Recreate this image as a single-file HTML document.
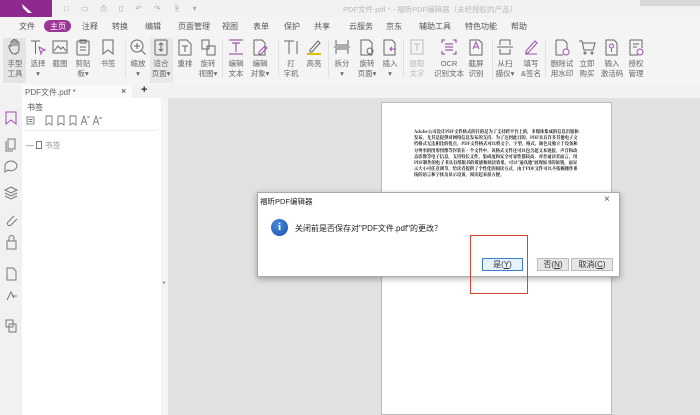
<!DOCTYPE html>
<html><head><meta charset="utf-8"><style>
*{margin:0;padding:0;box-sizing:border-box}
body{width:700px;height:415px;overflow:hidden;position:relative;background:#e1e1e1;font-family:"Liberation Sans","Noto Sans CJK SC",sans-serif;color:#444}
.a{position:absolute}
.t{position:absolute;font-size:8px;color:#555;white-space:nowrap}
.tool{position:absolute;top:38px;width:26px;text-align:center;font-size:7.5px;line-height:9.5px;color:#666}
.tool svg{display:block;margin:0 auto 3px;width:18px;height:18px}
.m{position:absolute;top:21px;font-size:8px;color:#555}
.sep{position:absolute;top:40px;width:1px;height:38px;background:#e2e2e2}
.btn{position:absolute;top:258px;height:13px;font-size:8px;text-align:center;line-height:11px;border:1px solid #bbb;background:#e6e6e6;color:#333}
</style></head><body>
<div class="a" style="left:0;top:0;width:700px;height:17px;background:#f2f2f2"></div>
<div class="a" style="left:0;top:0;width:52px;height:17px;background:#8e2a8f"></div>
<svg class="a" style="left:20px;top:2px" width="14" height="13"><path d="M2 2 L12 11 L8 11 L3 6 Z" fill="#fff"/></svg>
<div class="t" style="left:64px;top:3px;color:#aaa;letter-spacing:12px">□▭⎙▯↶↷☝▾</div>
<div class="t" style="left:343px;top:4px;color:#bbb;font-size:7.5px">PDF文件.pdf * - 福昕PDF编辑器（未经授权的产品）</div>
<div class="a" style="left:640px;top:0;width:60px;height:6px;background:#d8d8d8"></div>
<div class="a" style="left:0;top:17px;width:700px;height:68px;background:#f4f4f4"></div>
<div class="m" style="left:19px">文件</div>
<div class="a" style="left:44px;top:20px;width:27px;height:12px;border-radius:6px;background:#9b3596"></div>
<div class="m" style="left:50px;color:#fff">主页</div>
<div class="m" style="left:82px">注释</div>
<div class="m" style="left:112px">转换</div>
<div class="m" style="left:145px">编辑</div>
<div class="m" style="left:178px">页面管理</div>
<div class="m" style="left:222px">视图</div>
<div class="m" style="left:253px">表单</div>
<div class="m" style="left:284px">保护</div>
<div class="m" style="left:314px">共享</div>
<div class="m" style="left:349px">云服务</div>
<div class="m" style="left:386px">京东</div>
<div class="m" style="left:419px">辅助工具</div>
<div class="m" style="left:465px">特色功能</div>
<div class="m" style="left:511px">帮助</div>
<div class="a" style="left:3px;top:38px;width:23px;height:45px;background:#e4e4e4"></div>
<div class="a" style="left:150px;top:38px;width:23px;height:45px;background:#e8e8e8"></div>
<div class="sep" style="left:125px"></div><div class="sep" style="left:222px"></div><div class="sep" style="left:278px"></div><div class="sep" style="left:328px"></div><div class="sep" style="left:403px"></div><div class="sep" style="left:492px"></div><div class="sep" style="left:545px"></div>
<div class="tool" style="left:2px"><svg viewBox="0 0 18 18" fill="none" stroke="#666"><path d="M5 9V4a1 1 0 012 0v4M7 8V2.5a1 1 0 012 0V8M9 8V3a1 1 0 012 0v5M11 8V5a1 1 0 012 0v6c0 3-2 5-4.5 5S5 14 4 12L3 9a1 1 0 012-1"/></svg>手型<br>工具</div>
<div class="tool" style="left:25px"><svg viewBox="0 0 18 18" fill="none" stroke="#666"><path d="M2 3h9M6.5 3v13"/><path d="M10 9l6 3-3 1-1 3z" stroke="#a050b0"/></svg>选择<br>▾</div>
<div class="tool" style="left:47px"><svg viewBox="0 0 18 18" fill="none" stroke="#666"><rect x="2" y="3" width="14" height="12"/><path d="M3 13l4-5 3 3 2-2 3 4"/></svg>截图</div>
<div class="tool" style="left:70px"><svg viewBox="0 0 18 18" fill="none" stroke="#666"><rect x="3" y="3" width="12" height="14" rx="1"/><path d="M6 2h6v3H6zM6 9h6M6 12h6"/></svg>剪贴<br>板▾</div>
<div class="tool" style="left:95px"><svg viewBox="0 0 18 18" fill="none" stroke="#666"><path d="M4 2h10v14l-5-4-5 4z"/></svg>书签</div>
<div class="tool" style="left:125px"><svg viewBox="0 0 18 18" fill="none" stroke="#666"><circle cx="8" cy="8" r="6"/><path d="M12.5 12.5l4 4M5 8h6M8 5v6"/></svg>缩放<br>▾</div>
<div class="tool" style="left:148px"><svg viewBox="0 0 18 18" fill="none" stroke="#666"><rect x="3" y="2" width="12" height="15" rx="1"/><path d="M9 6v6M7 7l2-2 2 2M7 11l2 2 2-2"/></svg>适合<br>页面▾</div>
<div class="tool" style="left:172px"><svg viewBox="0 0 18 18" fill="none" stroke="#666"><path d="M3 2h8l4 4v11H3z"/><path d="M6 8h6M9 8v6"/></svg>重排</div>
<div class="tool" style="left:195px"><svg viewBox="0 0 18 18" fill="none" stroke="#666"><path d="M3 2h7v9H3zM8 8h8v9H8z"/></svg>旋转<br>视图▾</div>
<div class="tool" style="left:223px"><svg viewBox="0 0 18 18" fill="none" stroke="#8a3a9a"><path d="M2 2h14M2 16h14M5 5h8M9 5v9"/></svg>编辑<br>文本</div>
<div class="tool" style="left:247px"><svg viewBox="0 0 18 18" fill="none" stroke="#666"><path d="M3 2h8l3 3v12H3z"/><path d="M8 14l6-6 2 2-6 6H8z" stroke="#a050b0"/></svg>编辑<br>对象▾</div>
<div class="tool" style="left:278px"><svg viewBox="0 0 18 18" fill="none" stroke="#666"><path d="M2 3h10M7 3v13M15 3v13"/></svg>打<br>字机</div>
<div class="tool" style="left:301px"><svg viewBox="0 0 18 18" fill="none" stroke="#666"><path d="M5 12l8-9 2 2-8 9H5z"/><path d="M2 16h14" stroke="#e0c000" stroke-width="2"/></svg>高亮</div>
<div class="tool" style="left:329px"><svg viewBox="0 0 18 18" fill="none" stroke="#666"><path d="M3 2v5h12V2M3 16v-5h12v5M1 9h16"/></svg>拆分<br>▾</div>
<div class="tool" style="left:354px"><svg viewBox="0 0 18 18" fill="none" stroke="#666"><path d="M3 2h8l3 3v12H3z"/><circle cx="12" cy="13" r="3"/></svg>旋转<br>页面▾</div>
<div class="tool" style="left:377px"><svg viewBox="0 0 18 18" fill="none" stroke="#666"><path d="M3 2h8l3 3v12H3z"/><path d="M15 11H9M11 9l-2 2 2 2" stroke="#a050b0"/></svg>插入<br>▾</div>
<div class="tool" style="left:404px;color:#bbb"><svg viewBox="0 0 18 18" fill="none" stroke="#bbb"><rect x="3" y="2" width="12" height="14"/><path d="M6 6h6M9 6v7"/></svg>提取<br>文字</div>
<div class="tool" style="left:433px;width:32px"><svg viewBox="0 0 18 18" fill="none" stroke="#8a3a9a"><path d="M2 5V2h3M13 2h3v3M2 13v3h3M13 16h3v-3M5 6h8M5 9h8M5 12h8"/></svg>OCR<br>识别文本</div>
<div class="tool" style="left:463px"><svg viewBox="0 0 18 18" fill="none" stroke="#666"><path d="M3 2h9l3 3v12H3z"/><path d="M6 11l3-7 3 7M7 9h4" stroke="#a050b0"/></svg>截屏<br>识别</div>
<div class="tool" style="left:492px"><svg viewBox="0 0 18 18" fill="none" stroke="#666"><path d="M4 2h10v5M4 2v5M1 9h16M4 11v5h10v-5"/></svg>从扫<br>描仪▾</div>
<div class="tool" style="left:518px"><svg viewBox="0 0 18 18" fill="none" stroke="#a050b0"><path d="M4 13l9-10 2 2-9 10H4zM3 16h12"/></svg>填写<br>&amp;签名</div>
<div class="tool" style="left:549px"><svg viewBox="0 0 18 18" fill="none" stroke="#666"><path d="M3 2h8l3 3v6M3 2v15h7"/><circle cx="13" cy="14" r="3" stroke="#a050b0"/></svg>删除试<br>用水印</div>
<div class="tool" style="left:574px"><svg viewBox="0 0 18 18" fill="none" stroke="#666"><path d="M1 3h3l2 9h9l2-7H5"/><circle cx="7" cy="15" r="1"/><circle cx="14" cy="15" r="1"/></svg>立即<br>购买</div>
<div class="tool" style="left:599px"><svg viewBox="0 0 18 18" fill="none" stroke="#666"><path d="M3 2h8l3 3v12H3z"/><circle cx="8.5" cy="8" r="2" stroke="#a050b0"/><path d="M8.5 10v4" stroke="#a050b0"/></svg>输入<br>激活码</div>
<div class="tool" style="left:623px"><svg viewBox="0 0 18 18" fill="none" stroke="#666"><path d="M3 2h12v8M3 2v15h8M6 6h6M6 9h4"/><circle cx="13" cy="14" r="3" stroke="#a050b0"/></svg>授权<br>管理</div>
<div class="a" style="left:0;top:85px;width:700px;height:13px;background:#f2f2f2"></div>
<div class="a" style="left:22px;top:85px;width:110px;height:13px;background:#fafafa"></div>
<div class="t" style="left:25px;top:87px;color:#666">PDF文件.pdf *</div>
<div class="t" style="left:121px;top:86px;color:#333;font-size:9px">×</div>
<div class="t" style="left:141px;top:84px;color:#333;font-size:11px;font-weight:bold">+</div>
<div class="a" style="left:0;top:98px;width:22px;height:317px;background:#f1f1f1"></div>
<svg class="a" style="left:0;top:98px" width="22" height="250" fill="none" stroke="#777">
<path d="M6 14h10v12l-5-4-5 4z" stroke="#a050b0"/>
<path d="M8 41h7v10H8zM6 43v10h7"/>
<path d="M5 68a6 5 0 1112 0 6 5 0 01-9 4l-3 2z"/>
<path d="M11 89l6 3-6 3-6-3zM5 95l6 3 6-3M5 98l6 3 6-3"/>
<path d="M14 118l-6 6a2 2 0 003 3l6-6"/>
<path d="M7 143h9v8H7zM9 143v-3a2.5 2.5 0 015 0v3"/>
<path d="M7 170h6l3 3v9H7z"/>
<path d="M7 202l4-8 3 6M12 198h5"/>
<path d="M6 222h7v7H6zM9 226h7v8H9z"/>
</svg>
<div class="a" style="left:22px;top:98px;width:139px;height:317px;background:#fff"></div>
<div class="t" style="left:27px;top:102px;color:#444">书签</div>
<svg class="a" style="left:26px;top:115px" width="90" height="11" fill="none" stroke="#777" stroke-width="0.9">
<rect x="1" y="2" width="7" height="7"/><path d="M2.5 4.5h4M2.5 6.5h4"/>
<path d="M20 1h6v9l-3-2-3 2z"/><path d="M32 1h6v9l-3-2-3 2z"/><path d="M44 1h6v9l-3-2-3 2z"/>
<path d="M55 10l3-9 3 9M56 7h4M61 2h3"/><path d="M67 10l3-9 3 9M68 7h4M73 3h3"/>
</svg>
<div class="a" style="left:25px;top:130px;width:132px;height:1px;background:#eee"></div>
<div class="t" style="left:26px;top:140px;color:#666">— <span style="display:inline-block;width:6px;height:8px;border:1px solid #777;vertical-align:-1px"></span> <span style="color:#999">书签</span></div>
<div class="a" style="left:161px;top:98px;width:7px;height:317px;background:#f4f4f4"></div>
<div class="t" style="left:162px;top:279px;color:#999;font-size:6px">◂</div>
<div class="a" style="left:381px;top:102px;width:231px;height:313px;background:#fff;border:1px solid #bbb"></div>
<div class="a" style="left:414px;top:129px;width:166px;font-size:4.3px;line-height:6.2px;color:#111;font-family:'Noto Serif CJK SC',serif;font-weight:bold">Adobe公司设计PDF文件格式的目的是为了支持跨平台上的，多媒体集成的信息出版和发布，尤其是提供对网络信息发布的支持。为了达到此目的，PDF具有许多其他电子文档格式无法相比的优点。PDF文件格式可以将文字、字型、格式、颜色及独立于设备和分辨率的图形图像等封装在一个文件中。该格式文件还可以包含超文本链接、声音和动态影像等电子信息，支持特长文件，集成度和安全可靠性都较高。对普通读者而言，用PDF制作的电子书具有纸版书的质感和阅读效果，可以"逼真地"展现原书的原貌，而显示大小可任意调节，给读者提供了个性化的阅读方式。由于PDF文件可以不依赖操作系统的语言和字体及显示设备，阅读起来很方便。</div>
<div class="a" style="left:257px;top:192px;width:363px;height:85px;background:#fff;border:1px solid #aaa;box-shadow:0 2px 6px rgba(0,0,0,.3)"></div>
<div class="t" style="left:260px;top:196px;color:#222;font-size:7.5px">福昕PDF编辑器</div>
<div class="t" style="left:604px;top:194px;color:#555;font-size:10px">×</div>
<div class="a" style="left:271px;top:219px;width:17px;height:17px;border-radius:50%;background:radial-gradient(circle at 40% 35%,#4a8ae0,#1a4fa8);color:#fff;font:bold 11px 'Liberation Serif',serif;text-align:center;line-height:17px">i</div>
<div class="t" style="left:295px;top:223px;color:#222">关闭前是否保存对"PDF文件.pdf"的更改？</div>
<div class="btn" style="left:482px;width:41px;border-color:#3c7fd1;background:#e5f1fb">是(<u>Y</u>)</div>
<div class="btn" style="left:537px;width:32px">否(<u>N</u>)</div>
<div class="btn" style="left:571px;width:42px">取消(<u>C</u>)</div>
<div class="a" style="left:470px;top:235px;width:58px;height:59px;border:1.5px solid #d9432f"></div>
</body></html>
